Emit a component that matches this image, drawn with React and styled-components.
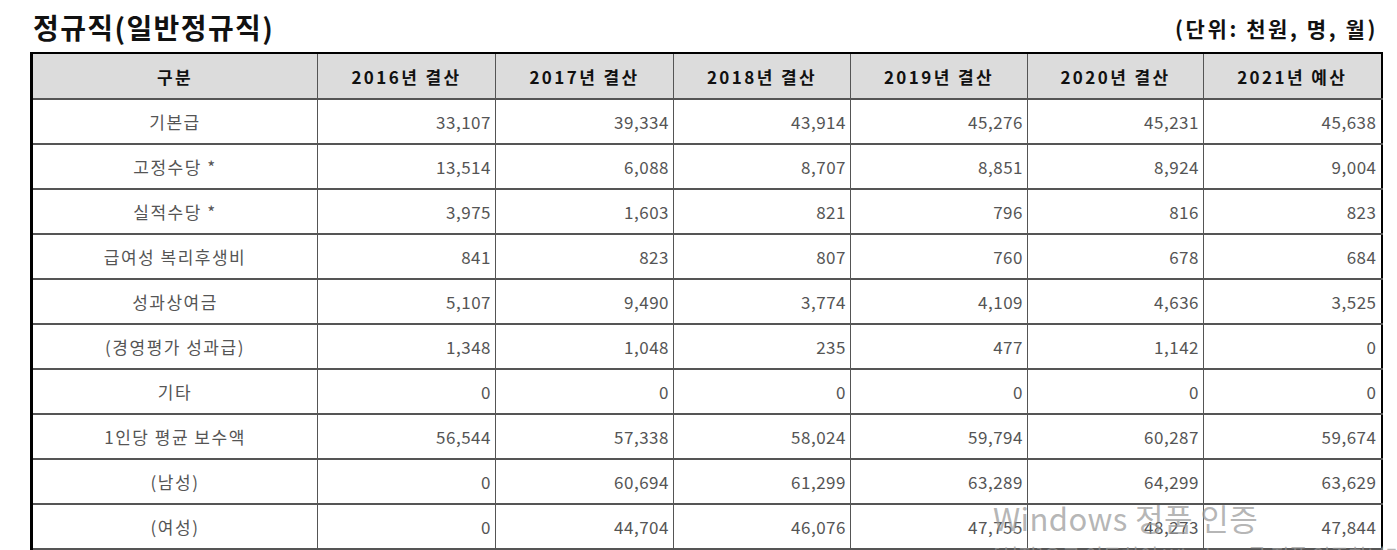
import React from 'react'
import styled, { createGlobalStyle } from 'styled-components'

const GlobalStyle = createGlobalStyle`
  body {
    margin: 0;
    background: #ffffff;
    font-family: 'Noto Sans CJK KR', 'Noto Sans', sans-serif;
  }
`

const Page = styled.div`
  position: relative;
  width: 1397px;
  height: 550px;
  overflow: hidden;
  padding: 0 0 0 30px;
  box-sizing: border-box;
`

const TitleRow = styled.div`
  display: flex;
  justify-content: space-between;
  align-items: flex-end;
  width: 1350px;
  height: 52px;
  padding: 0 2px 0 3px;
  box-sizing: border-box;
`

const Title = styled.h2`
  margin: 0 0 5px;
  font-size: 28px;
  font-weight: 700;
  color: #111;
  letter-spacing: 1.4px;
`

const Unit = styled.span`
  margin-bottom: 9px;
  font-size: 21px;
  font-weight: 700;
  color: #111;
  letter-spacing: 2.6px;
`

const Table = styled.table`
  width: 1350px;
  table-layout: fixed;
  border-collapse: collapse;
  border-top: 2px solid #000;
  border-left: 3px solid #000;
  border-right: 2px solid #000;
`

const HeadCell = styled.th`
  height: 44px;
  padding: 0;
  background: #dcdcdc;
  border: 1px solid #555;
  border-bottom: 2px solid #555;
  font-size: 17px;
  font-weight: 700;
  color: #111;
  letter-spacing: 2.4px;
  text-align: center;
  &:last-child { border-right: none; }
`

const Cell = styled.td`
  height: 43px;
  padding: 0 ${(p) => (p.$label ? '0' : '4px')} 0 0;
  border: 1px solid #555;
  border-bottom: 2px solid #555;
  font-size: 17px;
  color: #555;
  letter-spacing: ${(p) => (p.$label ? '1.5px' : '0.5px')};
  text-align: ${(p) => (p.$label ? 'center' : 'right')};
  &:last-child { border-right: none; }
`

const Watermark = styled.div`
  position: absolute;
  left: 993px;
  top: 496px;
  color: rgba(150, 150, 150, 0.7);
  white-space: nowrap;
  pointer-events: none;
`

const WatermarkTitle = styled.div`
  font-size: 31px;
  line-height: 44px;
  letter-spacing: 0.4px;
`

const WatermarkNote = styled.div`
  font-size: 20px;
  line-height: 28px;
  margin-top: 2px;
`

const columns = ['구분', '2016년 결산', '2017년 결산', '2018년 결산', '2019년 결산', '2020년 결산', '2021년 예산']
const widths = [286, 178, 178, 177, 177, 176, 178]

const rows = [
  ['기본급', '33,107', '39,334', '43,914', '45,276', '45,231', '45,638'],
  ['고정수당 *', '13,514', '6,088', '8,707', '8,851', '8,924', '9,004'],
  ['실적수당 *', '3,975', '1,603', '821', '796', '816', '823'],
  ['급여성 복리후생비', '841', '823', '807', '760', '678', '684'],
  ['성과상여금', '5,107', '9,490', '3,774', '4,109', '4,636', '3,525'],
  ['(경영평가 성과급)', '1,348', '1,048', '235', '477', '1,142', '0'],
  ['기타', '0', '0', '0', '0', '0', '0'],
  ['1인당 평균 보수액', '56,544', '57,338', '58,024', '59,794', '60,287', '59,674'],
  ['(남성)', '0', '60,694', '61,299', '63,289', '64,299', '63,629'],
  ['(여성)', '0', '44,704', '46,076', '47,755', '48,273', '47,844'],
]

const App = () => (
  <>
    <GlobalStyle />
    <Page>
      <TitleRow>
        <Title>정규직(일반정규직)</Title>
        <Unit>(단위: 천원, 명, 월)</Unit>
      </TitleRow>
      <Table>
        <colgroup>
          {widths.map((w, i) => (
            <col key={i} style={{ width: w }} />
          ))}
        </colgroup>
        <thead>
          <tr>
            {columns.map((c) => (
              <HeadCell key={c}>{c}</HeadCell>
            ))}
          </tr>
        </thead>
        <tbody>
          {rows.map((r) => (
            <tr key={r[0]}>
              {r.map((v, i) => (
                <Cell key={i} $label={i === 0}>
                  {v}
                </Cell>
              ))}
            </tr>
          ))}
        </tbody>
      </Table>
      <Watermark>
        <WatermarkTitle>Windows 정품 인증</WatermarkTitle>
        <WatermarkNote>[설정]으로 이동하여 Windows를 정품 인증합니다.</WatermarkNote>
      </Watermark>
    </Page>
  </>
)

export default App
